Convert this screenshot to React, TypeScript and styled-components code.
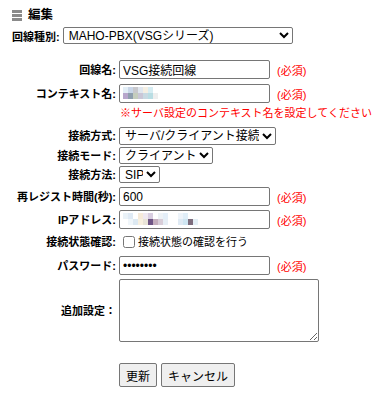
import React from 'react';
import styled, { createGlobalStyle } from 'styled-components';

const GlobalStyle = createGlobalStyle`
    body {
        margin: 0;
        background: #ffffff;
        color: #000000;
        font-family: "Liberation Sans", "Noto Sans CJK JP", sans-serif;
        font-size: 11px;
    }
`;

const Page = styled.div`
    padding: 8px 12px 6px 12px;
    width: 375px;
    box-sizing: border-box;
`;

const Title = styled.h2`
    display: flex;
    align-items: center;
    gap: 6px;
    margin: 0;
    height: 14px;
    font-size: 12.5px;
    font-weight: bold;
    line-height: 14px;
`;

const TypeRow = styled.div`
    display: flex;
    align-items: center;
    gap: 3px;
    margin-top: 5px;
    font-weight: bold;
`;

const Form = styled.div`
    display: flex;
    flex-direction: column;
    margin-top: 16px;
`;

const Row = styled.div<{ $top: number; $h: number }>`
    display: flex;
    align-items: center;
    gap: 3px;
    margin-top: ${p => p.$top}px;
    min-height: ${p => p.$h}px;
`;

const Label = styled.label`
    width: 104px;
    flex: none;
    text-align: right;
    font-weight: bold;
    white-space: nowrap;
    line-height: 14px;
`;

const Field = styled.div`
    display: flex;
    align-items: center;
    gap: 7px;
    position: relative;
`;

const TextInput = styled.input`
    box-sizing: border-box;
    width: 151px;
    height: 19px;
    margin: 0;
    padding: 1px 3px;
    border: 1px solid #767676;
    border-radius: 2px;
    font-family: "Liberation Sans", "Noto Sans CJK JP", sans-serif;
    font-size: 12px;
    color: #000000;
    background: #ffffff;
`;

const Select = styled.select<{ $w: number; $h?: number }>`
    box-sizing: border-box;
    width: ${p => p.$w}px;
    height: ${p => p.$h ?? 18}px;
    margin: 0;
    padding: 0 0 0 1px;
    border: 1px solid #767676;
    border-radius: 2px;
    font-family: "Liberation Sans", "Noto Sans CJK JP", sans-serif;
    font-size: 12px;
    color: #000000;
    background: #ffffff;
`;

const Required = styled.span`
    color: #ff0000;
    font-size: 11px;
    white-space: nowrap;
`;

const Note = styled.div`
    color: #ff0000;
    font-size: 11px;
    line-height: 15px;
    white-space: nowrap;
    padding-left: 108px;
`;

const CheckLabel = styled.label`
    display: flex;
    align-items: center;
    gap: 2px;
    font-size: 11px;
    line-height: 14px;
`;

const Check = styled.input`
    width: 12px;
    height: 12px;
    margin: 0 1px 0 4px;
`;

const Memo = styled.textarea`
    box-sizing: border-box;
    width: 200px;
    height: 63px;
    margin: 0;
    border: 1px solid #767676;
    border-radius: 2px;
    resize: both;
    font-family: "Liberation Sans", "Noto Sans CJK JP", sans-serif;
    font-size: 12px;
`;

const Buttons = styled.div`
    display: flex;
    gap: 4px;
    margin-top: 21px;
    padding-left: 107px;
`;

const Button = styled.button`
    box-sizing: border-box;
    height: 24px;
    margin: 0;
    padding: 0 6px;
    border: 1px solid #767676;
    border-radius: 2px;
    background: #efefef;
    font-family: "Liberation Sans", "Noto Sans CJK JP", sans-serif;
    font-size: 12px;
    color: #000000;
`;

// モザイク（値をぼかしたところ）
const Mosaic = styled.div<{ $cols: number }>`
    position: absolute;
    left: 4px;
    top: 3px;
    display: grid;
    grid-template-columns: repeat(${p => p.$cols}, 5px);
    grid-auto-rows: 6px;
    pointer-events: none;
`;

const Cell = styled.span<{ $c: string }>`
    background: ${p => p.$c};
`;

function EditIcon() {
    return (
        <svg width="10" height="11" viewBox="0 0 10 11">
            <rect x="0" y="0" width="10" height="3" fill="#8a8a8a" />
            <rect x="0" y="4" width="10" height="3" fill="#8a8a8a" />
            <rect x="0" y="8" width="10" height="3" fill="#8a8a8a" />
        </svg>
    );
}

const contextCells = [
    '#e3eef6', '#c9d6e8', '#c8c8cc', '#dfe6ee', '#f4eee2', '#d6ecf2', '#ffffff', '#ffffff',
    '#b7a6cc', '#8f9fae', '#c5cdbd', '#c9c6d6', '#c8d9e2', '#b9dde3', '#eeeeee', '#ffffff',
];

const ipCells = [
    '#eaf2f8', '#dfeaf5', '#ffffff', '#f6ead9', '#efe8f0', '#d8cde0', '#ffffff', '#eef2f6', '#e4eef8', '#ffffff', '#ffffff', '#eef4fa', '#e0eef8', '#ffffff', '#ffffff',
    '#ffffff', '#f0f6fa', '#dde9f2', '#f8f0e0', '#e9e4d8', '#6f5585', '#c4aebd', '#d8cdd8', '#e6eef5', '#ffffff', '#ffffff', '#dfeaf4', '#cfe6f2', '#7e6e7e', '#e4f0f6',
];

function App() {
    return (
        <Page>
            <GlobalStyle />
            <Title>
                <EditIcon />
                編集
            </Title>
            <TypeRow>
                回線種別:
                <Select $w={230} $h={17} defaultValue="maho">
                    <option value="maho">MAHO-PBX(VSGシリーズ)</option>
                </Select>
            </TypeRow>

            <Form>
                <Row $top={0} $h={19}>
                    <Label>回線名:</Label>
                    <Field>
                        <TextInput defaultValue="VSG接続回線" />
                        <Required>(必須)</Required>
                    </Field>
                </Row>
                <Row $top={5} $h={19}>
                    <Label>コンテキスト名:</Label>
                    <Field>
                        <TextInput defaultValue="" />
                        <Mosaic $cols={8}>
                            {contextCells.map((c, i) => <Cell key={i} $c={c} />)}
                        </Mosaic>
                        <Required>(必須)</Required>
                    </Field>
                </Row>
                <Row $top={3} $h={15}>
                    <Note>※サーバ設定のコンテキスト名を設定してください</Note>
                </Row>
                <Row $top={6} $h={18}>
                    <Label>接続方式:</Label>
                    <Select $w={157} defaultValue="sc">
                        <option value="sc">サーバ/クライアント接続</option>
                    </Select>
                </Row>
                <Row $top={2} $h={17}>
                    <Label>接続モード:</Label>
                    <Select $w={94} $h={17} defaultValue="client">
                        <option value="client">クライアント</option>
                    </Select>
                </Row>
                <Row $top={2} $h={17}>
                    <Label>接続方法:</Label>
                    <Select $w={41} $h={17} defaultValue="sip">
                        <option value="sip">SIP</option>
                    </Select>
                </Row>
                <Row $top={4} $h={19}>
                    <Label>再レジスト時間(秒):</Label>
                    <Field>
                        <TextInput defaultValue="600" />
                        <Required>(必須)</Required>
                    </Field>
                </Row>
                <Row $top={4} $h={19}>
                    <Label>IPアドレス:</Label>
                    <Field>
                        <TextInput defaultValue="" />
                        <Mosaic $cols={15}>
                            {ipCells.map((c, i) => <Cell key={i} $c={c} />)}
                        </Mosaic>
                        <Required>(必須)</Required>
                    </Field>
                </Row>
                <Row $top={4} $h={18}>
                    <Label>接続状態確認:</Label>
                    <CheckLabel>
                        <Check type="checkbox" />
                        接続状態の確認を行う
                    </CheckLabel>
                </Row>
                <Row $top={5} $h={19}>
                    <Label>パスワード:</Label>
                    <Field>
                        <TextInput type="password" defaultValue="12345678" />
                        <Required>(必須)</Required>
                    </Field>
                </Row>
                <Row $top={4} $h={63}>
                    <Label>追加設定：</Label>
                    <Memo />
                </Row>
            </Form>

            <Buttons>
                <Button>更新</Button>
                <Button>キャンセル</Button>
            </Buttons>
        </Page>
    );
}

export default App;
